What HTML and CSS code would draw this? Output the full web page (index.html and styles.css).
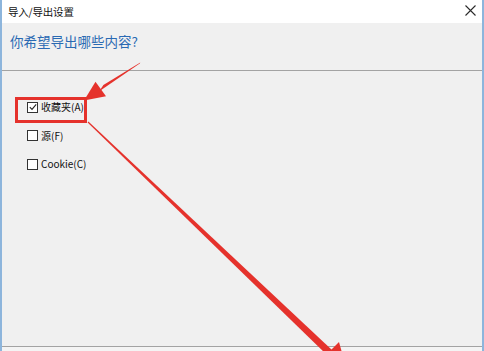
FILE: index.html
```html
<!DOCTYPE html>
<html lang="zh-CN">
<head>
<meta charset="utf-8">
<title>导入/导出设置</title>
<link rel="stylesheet" href="styles.css">
</head>
<body>
<div class="frame">
  <div class="titlebar">
    <span class="title">导入/导出设置</span>
    <span class="close">
      <svg width="11" height="11" viewBox="0 0 11 11"><path d="M0.5 0.5L10.5 10.5M10.5 0.5L0.5 10.5" stroke="#2a2a2a" stroke-width="1.1" fill="none"/></svg>
    </span>
  </div>
  <div class="header">
    <h1 class="heading">你希望导出哪些内容?</h1>
  </div>
  <div class="content">
    <div class="options">
      <label class="option"><span class="box"><svg width="8" height="8" viewBox="0 0 8 8"><path d="M0.8 4.2L3 6.4L7.2 1.4" stroke="#222" stroke-width="1.1" fill="none"/></svg></span>收藏夹(A)</label>
      <label class="option"><span class="box"></span>源(F)</label>
      <label class="option"><span class="box"></span>Cookie(C)</label>
    </div>
  </div>
  <div class="footer"></div>
  <svg class="annot" width="484" height="351" viewBox="0 0 484 351">
    <rect x="16.5" y="98.5" width="69" height="23" fill="none" stroke="#e5322c" stroke-width="3"/>
    <polygon points="140.3,62.6 139.7,63.4 99,91.5 103.4,84.9" fill="#e5322c"/>
    <polygon points="84,100.5 95.5,81.8 106,96.2" fill="#e5322c"/>
    <polygon points="88.4,121.6 87.6,122.4 327,355 332,350" fill="#e5322c"/>
    <polygon points="348,374 320,361 339,342" fill="#e5322c"/>
  </svg>
</div>
</body>
</html>
```
FILE: styles.css
```css
html, body {
  margin: 0;
  padding: 0;
}
body {
  width: 484px;
  height: 351px;
  overflow: hidden;
  background: #f0f0f0;
  font-family: "Noto Sans CJK SC", "Noto Sans", "Liberation Sans", sans-serif;
  color: #000;
}
.frame {
  position: relative;
  box-sizing: border-box;
  width: 484px;
  height: 351px;
  display: flex;
  flex-direction: column;
  border-left: 2px solid #8db5dc;
  border-right: 2px solid #8db5dc;
  background: #f0f0f0;
}
.titlebar {
  height: 23px;
  flex: none;
  background: #fff;
  display: flex;
  align-items: center;
  justify-content: space-between;
  padding: 0 6px 0 6px;
}
.title {
  font-size: 10.5px;
  line-height: 14px;
  color: #111;
  letter-spacing: -0.2px;
}
.close {
  display: flex;
  width: 11px;
  height: 11px;
  margin-right: 0;
  margin-top: -2px;
}
.header {
  height: 48px;
  flex: none;
  box-sizing: border-box;
  border-bottom: 1px solid #a3a3a3;
  display: flex;
  align-items: flex-start;
  padding: 8px 0 0 8px;
}
.heading {
  margin: 0;
  font-size: 13.5px;
  font-weight: normal;
  line-height: 20px;
  color: #2a6ab3;
}
.content {
  flex: 1;
  padding: 29px 0 0 25px;
}
.options {
  display: flex;
  flex-direction: column;
  gap: 14.5px;
}
.option {
  display: flex;
  align-items: center;
  height: 14px;
  font-size: 10px;
  line-height: 14px;
  color: #111;
}
.box {
  box-sizing: border-box;
  width: 11px;
  height: 11px;
  border: 1px solid #333;
  background: #fff;
  margin-right: 3px;
  display: flex;
  align-items: center;
  justify-content: center;
}
.footer {
  height: 4px;
  flex: none;
  border-top: 1px solid #a3a3a3;
  background: #f4f4f4;
}
.annot {
  position: absolute;
  left: -2px;
  top: 0;
  pointer-events: none;
}
```
